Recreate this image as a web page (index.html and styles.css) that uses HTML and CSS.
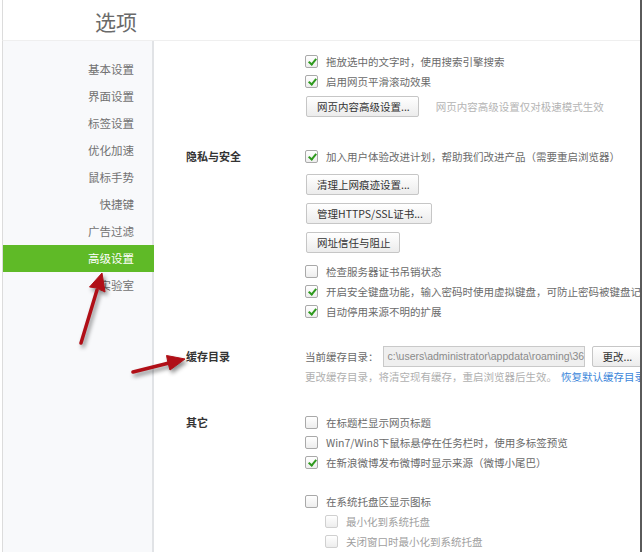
FILE: index.html
```html
<!DOCTYPE html>
<html lang="zh-CN">
<head>
    <meta charset="UTF-8">
    <title>选项</title>
    <link rel="stylesheet" href="styles.css">
</head>
<body>
<div class="window">
    <div class="header">
        <h1 class="title">选项</h1>
    </div>
    <div class="main">
        <ul class="nav">
            <li>基本设置</li>
            <li>界面设置</li>
            <li>标签设置</li>
            <li>优化加速</li>
            <li>鼠标手势</li>
            <li>快捷键</li>
            <li>广告过滤</li>
            <li class="active">高级设置</li>
            <li>实验室</li>
        </ul>
        <div class="content">
            <div class="section">
                <div class="sec-label"></div>
                <div class="sec-body">
                    <div class="opt"><span class="cb on"></span>拖放选中的文字时，使用搜索引擎搜索</div>
                    <div class="opt"><span class="cb on"></span>启用网页平滑滚动效果</div>
                    <div class="btn-row first-btn">
                        <span class="button">网页内容高级设置...</span>
                        <span class="hint">网页内容高级设置仅对极速模式生效</span>
                    </div>
                </div>
            </div>

            <div class="section privacy">
                <div class="sec-label">隐私与安全</div>
                <div class="sec-body">
                    <div class="opt"><span class="cb on"></span>加入用户体验改进计划，帮助我们改进产品（需要重启浏览器）</div>
                    <div class="btn-row"><span class="button">清理上网痕迹设置...</span></div>
                    <div class="btn-row"><span class="button">管理HTTPS/SSL证书...</span></div>
                    <div class="btn-row"><span class="button">网址信任与阻止</span></div>
                    <div class="opts-after">
                        <div class="opt"><span class="cb"></span>检查服务器证书吊销状态</div>
                        <div class="opt"><span class="cb on"></span>开启安全键盘功能，输入密码时使用虚拟键盘，可防止密码被键盘记录</div>
                        <div class="opt"><span class="cb on"></span>自动停用来源不明的扩展</div>
                    </div>
                </div>
            </div>

            <div class="section cache">
                <div class="sec-label">缓存目录</div>
                <div class="sec-body">
                    <div class="cache-row">
                        <span>当前缓存目录：</span>
                        <span class="path">c:\users\administrator\appdata\roaming\36</span>
                        <span class="button change">更改...</span>
                    </div>
                    <div class="cache-note">更改缓存目录，将清空现有缓存，重启浏览器后生效。<a class="link">恢复默认缓存目录</a></div>
                </div>
            </div>

            <div class="section other">
                <div class="sec-label">其它</div>
                <div class="sec-body">
                    <div class="opt"><span class="cb"></span>在标题栏显示网页标题</div>
                    <div class="opt"><span class="cb"></span>Win7/Win8下鼠标悬停在任务栏时，使用多标签预览</div>
                    <div class="opt"><span class="cb on"></span>在新浪微博发布微博时显示来源（微博小尾巴）</div>
                    <div class="tray">
                        <div class="opt"><span class="cb"></span>在系统托盘区显示图标</div>
                        <div class="opt sub"><span class="cb"></span>最小化到系统托盘</div>
                        <div class="opt sub"><span class="cb"></span>关闭窗口时最小化到系统托盘</div>
                    </div>
                </div>
            </div>
        </div>
    </div>

    <!-- annotation arrows drawn over the page -->
    <svg class="arrows" width="642" height="552" viewBox="0 0 642 552">
        <g class="arrow">
            <line x1="81" y1="343" x2="97" y2="290" />
            <polygon points="102,273 105,292 97,288 89.5,287" />
        </g>
        <g class="arrow">
            <line x1="133" y1="372" x2="169" y2="363" />
            <polygon points="185,359 170,370 168,363 166.5,355.5" />
        </g>
    </svg>
</div>
</body>
</html>
```

FILE: styles.css
```css
body {
    margin: 0;
    font-family: "Noto Sans CJK SC", sans-serif;
    background: #fff;
}
.window {
    position: relative;
    width: 642px;
    height: 552px;
    box-sizing: border-box;
    margin: 0;
    padding-left: 2px;
    border-right: 2px solid #5a5a5a;
    overflow: hidden;
    background: #fff;
}
.header {
    height: 40px;
    border-left: 1px solid #dcdcdc;
    border-bottom: 1px solid #efefef;
}
.title {
    width: 150px;
    margin: 0;
    padding: 2px 16px 0 0;
    box-sizing: border-box;
    text-align: right;
    font-size: 21px;
    font-weight: normal;
    line-height: 38px;
    color: #6a6a6a;
}
.main {
    display: flex;
    height: 511px;
}
.nav {
    list-style: none;
    margin: 0;
    padding: 15px 0 0 0;
    width: 152px;
    flex-shrink: 0;
    box-sizing: border-box;
    background: #f8f9fb;
    border-left: 1px solid #dcdcdc;
    border-right: 2px solid #e1e3e6;
}
.nav li {
    height: 27px;
    line-height: 27px;
    padding-right: 18px;
    text-align: right;
    font-size: 11.5px;
    color: #717171;
}
.nav li.active {
    background: #5fba27;
    color: #fff;
    margin-right: -2px;
    padding-right: 20px;
}
.content {
    flex: 1;
    padding: 10px 0 0 32px;
    overflow: hidden;
    font-size: 10.5px;
    color: #6a6a6a;
}
.section {
    display: flex;
}
.sec-label {
    width: 119px;
    flex-shrink: 0;
    line-height: 20px;
    font-size: 11px;
    font-weight: bold;
    color: #333;
}
.sec-body {
    flex: 1;
    min-width: 0;
}
.opt {
    display: flex;
    align-items: center;
    height: 20px;
    white-space: nowrap;
}
.opt.sub {
    padding-left: 20px;
    color: #a0a0a0;
}
.opt.sub .cb {
    border-color: #d0d0d0;
}
.cb {
    position: relative;
    width: 11px;
    height: 11px;
    flex-shrink: 0;
    margin-right: 8px;
    border: 1px solid #a9a9a9;
    border-radius: 2px;
    background: linear-gradient(#ffffff, #ededed);
}
.cb.on::after {
    content: "";
    position: absolute;
    left: 3.5px;
    top: 1px;
    width: 3px;
    height: 6px;
    border-right: 2px solid #2f9a1e;
    border-bottom: 2px solid #2f9a1e;
    transform: rotate(40deg);
}
.btn-row {
    display: flex;
    align-items: center;
    margin-top: 8px;
    padding-left: 1px;
    white-space: nowrap;
}
.btn-row.first-btn {
    margin-top: 5px;
}
.button {
    display: inline-block;
    height: 21px;
    line-height: 19px;
    box-sizing: border-box;
    padding: 0 8px 0 10px;
    border: 1px solid #c6c6c6;
    border-radius: 2px;
    background: linear-gradient(#ffffff, #ececec);
    color: #333;
    font-size: 10.5px;
    white-space: nowrap;
}
.hint {
    margin-left: 17px;
    color: #b4b4b4;
}
.opts-after {
    margin-top: 8px;
}
.privacy {
    margin-top: 29px;
}
.cache {
    margin-top: 25px;
}
.cache-row {
    display: flex;
    align-items: center;
    height: 21px;
    white-space: nowrap;
}
.path {
    width: 202px;
    height: 21px;
    box-sizing: border-box;
    margin-left: 4px;
    padding: 0 4px;
    line-height: 19px;
    border: 1px solid #c9c9c9;
    background: #efefef;
    color: #8a8a8a;
    font-family: "Liberation Sans", sans-serif;
    font-size: 10.5px;
    overflow: hidden;
    flex-shrink: 0;
}
.button.change {
    margin-left: 7px;
    width: 60px;
    flex-shrink: 0;
}
.cache-note {
    line-height: 20px;
    color: #b0b0b0;
    white-space: nowrap;
}
.link {
    margin-left: 4px;
    color: #3b86da;
}
.other {
    margin-top: 25px;
}
.tray {
    margin-top: 19px;
}
.arrows {
    position: absolute;
    left: 0;
    top: 0;
    pointer-events: none;
}
.arrow {
    fill: #b00f17;
    stroke: #b00f17;
    filter: drop-shadow(2px 3px 2px rgba(0, 0, 0, 0.45));
}
.arrow line {
    stroke-width: 3.5;
    stroke-linecap: round;
}
.arrow polygon {
    stroke-width: 1;
    stroke-linejoin: round;
}
```
